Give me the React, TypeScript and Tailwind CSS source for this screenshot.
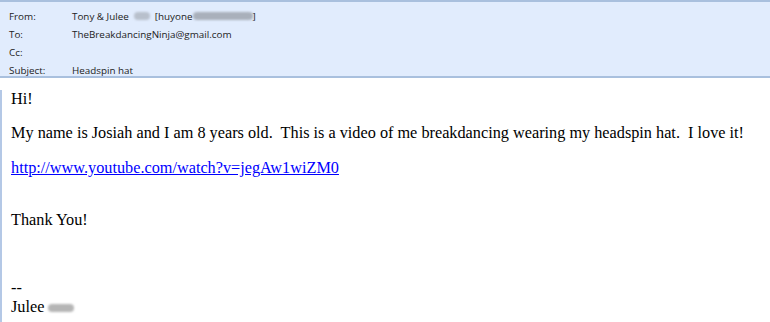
import React from 'react';

function Blur({ w, className = '' }: { w: number; className?: string }) {
  return (
    <span
      className={`inline-block h-[8px] align-middle rounded-sm blur-[1px] ${className}`}
      style={{ width: w }}
    />
  );
}

const fields = [
  { label: 'From:', value: 'from' },
  { label: 'To:', value: 'TheBreakdancingNinja@gmail.com' },
  { label: 'Cc:', value: '' },
  { label: 'Subject:', value: 'Headspin hat' },
];

export default function App() {
  return (
    <div className="w-[770px] h-[322px] overflow-hidden bg-white">
      <div className="h-[78px] border-t-2 border-b-2 border-[#a9c0de] bg-[#e1ecfd] pt-[5px] font-['Open_Sans',sans-serif] text-[9.85px] text-[#222]">
        {fields.map(f => (
          <div key={f.label} className="flex h-[18px] items-center">
            <span className="w-[72px] pl-[9px]">{f.label}</span>
            {f.value === 'from' ? (
              <span className="flex items-center">
                Tony &amp; Julee <Blur w={16} className="mx-[5px] bg-[#b8c0cc]" />[huyone
                <Blur w={60} className="bg-[#a9b0bb]" />]
              </span>
            ) : (
              <span>{f.value}</span>
            )}
          </div>
        ))}
      </div>
      <div className="h-[244px] border-l-2 border-[#b4c8e6] pl-[9px] font-['Liberation_Serif',serif] text-[16.25px] leading-[19px] text-black">
        <p className="mt-[12px]">Hi!</p>
        <p className="mt-[15px]">
          My name is Josiah and I am 8 years old.&nbsp; This is a video of me breakdancing wearing my headspin hat.&nbsp; I love it!
        </p>
        <p className="mt-[16px]">
          <a href="#" className="text-[#0000ff] underline">http://www.youtube.com/watch?v=jegAw1wiZM0</a>
        </p>
        <p className="mt-[33px]">Thank You!</p>
        <p className="mt-[49px]">--</p>
        <p className="flex items-center">
          Julee <Blur w={26} className="ml-[4px] bg-[#b5b5b5]" />
        </p>
      </div>
    </div>
  );
}
